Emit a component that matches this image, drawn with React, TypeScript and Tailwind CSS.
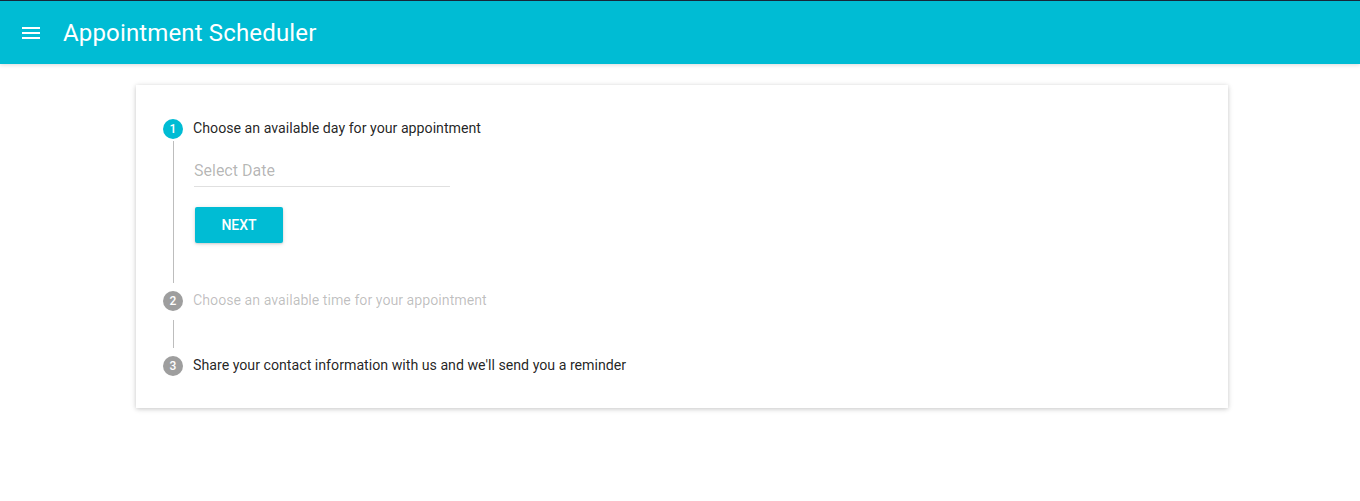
const font = { fontFamily: "Roboto, 'Noto Sans', sans-serif" };

function StepIcon({ n, active }: { n: number; active?: boolean }) {
  return (
    <div
      className={
        "w-5 h-5 rounded-full flex items-center justify-center text-[12px] font-medium text-white shrink-0 " +
        (active ? "bg-[#00bcd4]" : "bg-[#9e9e9e]")
      }
    >
      {n}
    </div>
  );
}

export default function App() {
  return (
    <div className="min-h-[501px] bg-white" style={font}>
      {/* App bar */}
      <header className="h-16 bg-[#00bcd4] border-t border-[#17263a] flex items-center shadow-[0_1px_4px_rgba(0,0,0,0.15)]">
        <button className="w-6 h-6 ml-[19px] flex items-center justify-center">
          <svg width="24" height="24" viewBox="0 0 24 24" fill="#fff">
            <path d="M3 18h18v-2H3v2zm0-5h18v-2H3v2zm0-7v2h18V6H3z" />
          </svg>
        </button>
        <h1 className="ml-[20px] text-[24px] tracking-[0.15px] text-white leading-8">Appointment Scheduler</h1>
      </header>

      {/* Stepper card */}
      <div className="pt-[21px] pl-[136px] pr-[132px]">
        <div className="bg-white shadow-[0_1px_6px_rgba(0,0,0,0.12),0_1px_4px_rgba(0,0,0,0.12)] pt-[34px] pb-[32px] px-[27px]">
          {/* Step 1 */}
          <div className="flex items-center h-5 gap-[10px]">
            <StepIcon n={1} active />
            <span className="text-[14.2px] text-[rgba(0,0,0,0.87)]">Choose an available day for your appointment</span>
          </div>
          <div className="ml-[9.5px] border-l border-[#bdbdbd] pl-[20.5px] pt-[18px] pb-[40px] mt-[2px] mb-[8px]">
            <div className="w-[256px] border-b border-[#e0e0e0] pb-[3px]">
              <span className="text-[16px] text-[rgba(0,0,0,0.3)]">Select Date</span>
            </div>
            <button className="mt-5 ml-px w-[88px] h-9 bg-[#00bcd4] text-white text-[14px] font-medium rounded-[2px] shadow-[0_1px_5px_rgba(0,0,0,0.12),0_1px_2px_rgba(0,0,0,0.12)]">
              NEXT
            </button>
          </div>

          {/* Step 2 */}
          <div className="flex items-center h-5 gap-[10px]">
            <StepIcon n={2} />
            <span className="text-[14.2px] text-[rgba(0,0,0,0.26)]">Choose an available time for your appointment</span>
          </div>
          <div className="ml-[9.5px] border-l border-[#bdbdbd] h-7 mb-[8px] mt-[9px]"></div>

          {/* Step 3 */}
          <div className="flex items-center h-5 gap-[10px]">
            <StepIcon n={3} />
            <span className="text-[14.2px] text-[rgba(0,0,0,0.87)]">Share your contact information with us and we'll send you a reminder</span>
          </div>
        </div>
      </div>
    </div>
  );
}
